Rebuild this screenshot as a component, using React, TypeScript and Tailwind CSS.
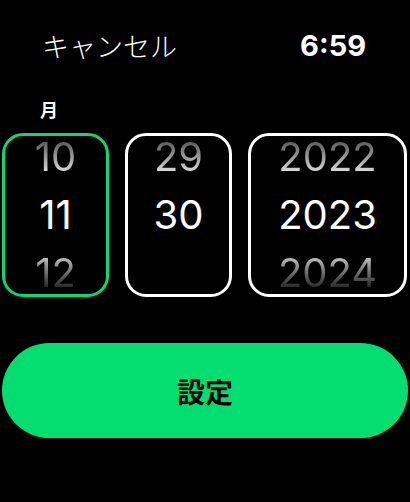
import React from 'react';

type Column = {
  prev: string;
  current: string;
  next?: string;
  width: string;
  active?: boolean;
};

const columns: Column[] = [
  { prev: '10', current: '11', next: '12', width: 'w-[107px]', active: true },
  { prev: '29', current: '30', width: 'w-[107px]' },
  { prev: '2022', current: '2023', next: '2024', width: 'w-[159px]' },
];

const numFont = { fontFamily: 'Inter, "Noto Sans CJK JP", sans-serif' };

function Wheel({ col }: { col: Column }) {
  return (
    <div
      className={
        'h-[164px] rounded-[21px] border-[3px] overflow-hidden flex flex-col items-center justify-center ' +
        col.width +
        (col.active ? ' border-[#0bd874]' : ' border-white')
      }
    >
      <div className="h-[58px] shrink-0 flex items-center">
        <span className="text-[40px] leading-[30px] py-[1px] bg-gradient-to-b from-[#5a5a5a] to-[#e0e0e0] bg-clip-text text-transparent">
          {col.prev}
        </span>
      </div>
      <div className="h-[58px] shrink-0 flex items-center text-[40px] leading-none text-white">
        {col.current}
      </div>
      <div className="h-[58px] shrink-0 flex items-center">
        <span className="text-[40px] leading-[30px] py-[1px] bg-gradient-to-b from-[#c4c4c4] to-[#222222] bg-clip-text text-transparent">
          {col.next ?? ''}
        </span>
      </div>
    </div>
  );
}

export default function App() {
  return (
    <div
      className="w-[410px] h-[502px] bg-black text-white flex flex-col overflow-hidden"
      style={{ fontFamily: '"Noto Sans CJK JP", Inter, sans-serif' }}
    >
      {/* Header */}
      <div className="flex items-center justify-between pt-[26px] pl-[42px] pr-[44px] h-[64px]">
        <span className="text-[27px] font-light leading-none">キャンセル</span>
        <span className="text-[29px] font-bold leading-none" style={numFont}>
          6:59
        </span>
      </div>

      {/* Label */}
      <div className="pl-[40px] mt-[36px] text-[18px] font-bold leading-none h-[33px]">月</div>

      {/* Wheels */}
      <div className="flex px-[2px] gap-[16px]" style={numFont}>
        {columns.map((c) => (
          <Wheel key={c.current} col={c} />
        ))}
      </div>

      {/* Button */}
      <div className="px-[2px] mt-[46px]">
        <button className="w-full h-[95px] rounded-full bg-[#04de71] text-black text-[28px] font-bold flex items-center justify-center">
          設定
        </button>
      </div>
    </div>
  );
}
